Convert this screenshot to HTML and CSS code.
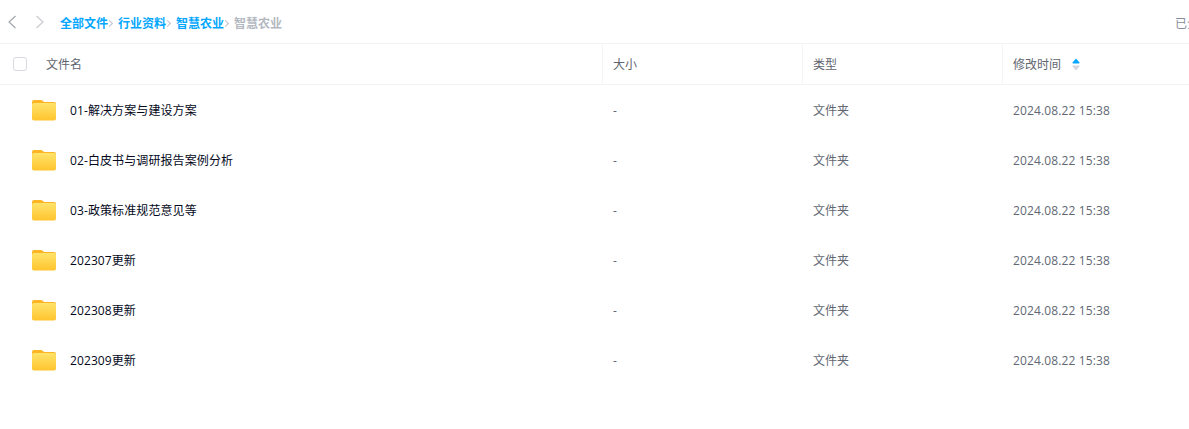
FILE: index.html
```html
<!DOCTYPE html>
<html lang="zh-CN">
<head>
<meta charset="utf-8">
<title>智慧农业</title>
<link rel="stylesheet" href="styles.css">
</head>
<body>
<div class="toolbar">
  <svg class="nav nav-back" width="10" height="14" viewBox="0 0 10 14"><path d="M8.5 1 L2 7 L8.5 13" fill="none" stroke="#a3a7ad" stroke-width="1.2"/></svg>
  <svg class="nav nav-forward" width="10" height="14" viewBox="0 0 10 14"><path d="M1.5 1 L8 7 L1.5 13" fill="none" stroke="#c9ccd1" stroke-width="1.2"/></svg>
  <nav class="crumbs">
    <a class="crumb">全部文件</a><span class="sep"></span>
    <a class="crumb">行业资料</a><span class="sep"></span>
    <a class="crumb">智慧农业</a><span class="sep"></span>
    <span class="crumb current">智慧农业</span>
  </nav>
  <span class="loaded">已全部加载，共6个</span>
</div>
<div class="row head">
  <div class="cell name"><span class="check"></span><span class="head-title">文件名</span></div>
  <div class="cell size">大小</div>
  <div class="cell type">类型</div>
  <div class="cell time">修改时间
    <svg class="sort" width="8" height="13" viewBox="0 0 8 13"><path d="M4 0.5 L7.5 4.5 Q7.5 5.5 7 5.5 H1 Q0.5 5.5 0.5 4.5 Z" fill="#06a7ff"/><path d="M1 7.5 H7 Q7.5 7.5 7.5 8.5 L4 12.5 L0.5 8.5 Q0.5 7.5 1 7.5 Z" fill="#d4d7de"/></svg>
  </div>
</div>
<div class="row item">
  <div class="cell name"><svg class="folder" width="26" height="22" viewBox="0 0 26 22"><use href="#folder-icon"/></svg><span class="fname">01-解决方案与建设方案</span></div>
  <div class="cell size">-</div><div class="cell type">文件夹</div><div class="cell time">2024.08.22 15:38</div>
</div>
<div class="row item">
  <div class="cell name"><svg class="folder" width="26" height="22" viewBox="0 0 26 22"><use href="#folder-icon"/></svg><span class="fname">02-白皮书与调研报告案例分析</span></div>
  <div class="cell size">-</div><div class="cell type">文件夹</div><div class="cell time">2024.08.22 15:38</div>
</div>
<div class="row item">
  <div class="cell name"><svg class="folder" width="26" height="22" viewBox="0 0 26 22"><use href="#folder-icon"/></svg><span class="fname">03-政策标准规范意见等</span></div>
  <div class="cell size">-</div><div class="cell type">文件夹</div><div class="cell time">2024.08.22 15:38</div>
</div>
<div class="row item">
  <div class="cell name"><svg class="folder" width="26" height="22" viewBox="0 0 26 22"><use href="#folder-icon"/></svg><span class="fname">202307更新</span></div>
  <div class="cell size">-</div><div class="cell type">文件夹</div><div class="cell time">2024.08.22 15:38</div>
</div>
<div class="row item">
  <div class="cell name"><svg class="folder" width="26" height="22" viewBox="0 0 26 22"><use href="#folder-icon"/></svg><span class="fname">202308更新</span></div>
  <div class="cell size">-</div><div class="cell type">文件夹</div><div class="cell time">2024.08.22 15:38</div>
</div>
<div class="row item">
  <div class="cell name"><svg class="folder" width="26" height="22" viewBox="0 0 26 22"><use href="#folder-icon"/></svg><span class="fname">202309更新</span></div>
  <div class="cell size">-</div><div class="cell type">文件夹</div><div class="cell time">2024.08.22 15:38</div>
</div>
<svg class="defs" width="0" height="0">
  <defs>
    <linearGradient id="folder-front" x1="0" y1="0" x2="0" y2="1"><stop offset="0" stop-color="#ffe36b"/><stop offset="1" stop-color="#ffc42e"/></linearGradient>
    <symbol id="folder-icon" viewBox="0 0 26 22">
      <path d="M1 3 Q1 1 3 1 H9.5 Q11 1 12 2 L13 3 H23 Q25 3 25 5 V12 H1 Z" fill="#fdb526"/>
      <rect x="1" y="4" width="24" height="17.5" rx="2" fill="url(#folder-front)"/>
    </symbol>
  </defs>
</svg>
</body>
</html>
```
FILE: styles.css
```css
* { box-sizing: border-box; }
html, body { margin: 0; padding: 0; }
body {
  background: #fff;
  font-family: "Open Sans", "Noto Sans CJK SC", sans-serif;
  font-size: 12px;
  line-height: 18px;
  color: #454d5a;
  overflow: hidden;
  width: 1189px;
  height: 429px;
}
.toolbar {
  height: 44px;
  border-bottom: 1px solid #f1f2f4;
  display: flex;
  align-items: center;
  padding-left: 7px;
  white-space: nowrap;
}
.nav { flex: none; }
.nav-forward { margin-left: 18px; }
.crumbs { display: flex; align-items: center; flex: 1; margin-left: 15px; padding-top: 4px; font-weight: 700; }
.crumb { color: #06a7ff; }
.crumb.current { color: #b4b8c1; }
.sep {
  width: 5px; height: 5px;
  border-top: 1px solid #bfc3ca;
  border-right: 1px solid #bfc3ca;
  transform: rotate(45deg);
  margin: 0 6px 0 -1px;
}
.loaded { flex: none; width: 14px; overflow: hidden; color: #878c9c; padding-top: 4px; }
.row { display: grid; grid-template-columns: 602px 200px 200px 1fr; align-items: center; }
.head { height: 41px; border-bottom: 1px solid #f1f2f4; color: #5f6570; }
.head .cell { height: 40px; display: flex; align-items: center; padding-top: 2px; }
.head .size, .head .type, .head .time { border-left: 1px solid #f4f5f6; padding-left: 10px; }
.check {
  width: 14px; height: 14px;
  border: 1px solid #d7d9de;
  border-radius: 3px;
  margin-left: 13px;
  margin-top: -2px;
  flex: none;
}
.head-title { margin-left: 19px; }
.sort { margin-left: 11px; margin-top: -2px; }
.item { height: 50px; color: #626873; }
.item .cell { padding-left: 11px; padding-top: 2px; }
.item .name { display: flex; align-items: center; padding-left: 31px; padding-top: 0; }
.item .time { letter-spacing: 0.13px; }
.folder { flex: none; }
.fname { margin-left: 13px; margin-top: 2px; letter-spacing: 0.1px; color: #03081a; }
.defs { position: absolute; }
```
